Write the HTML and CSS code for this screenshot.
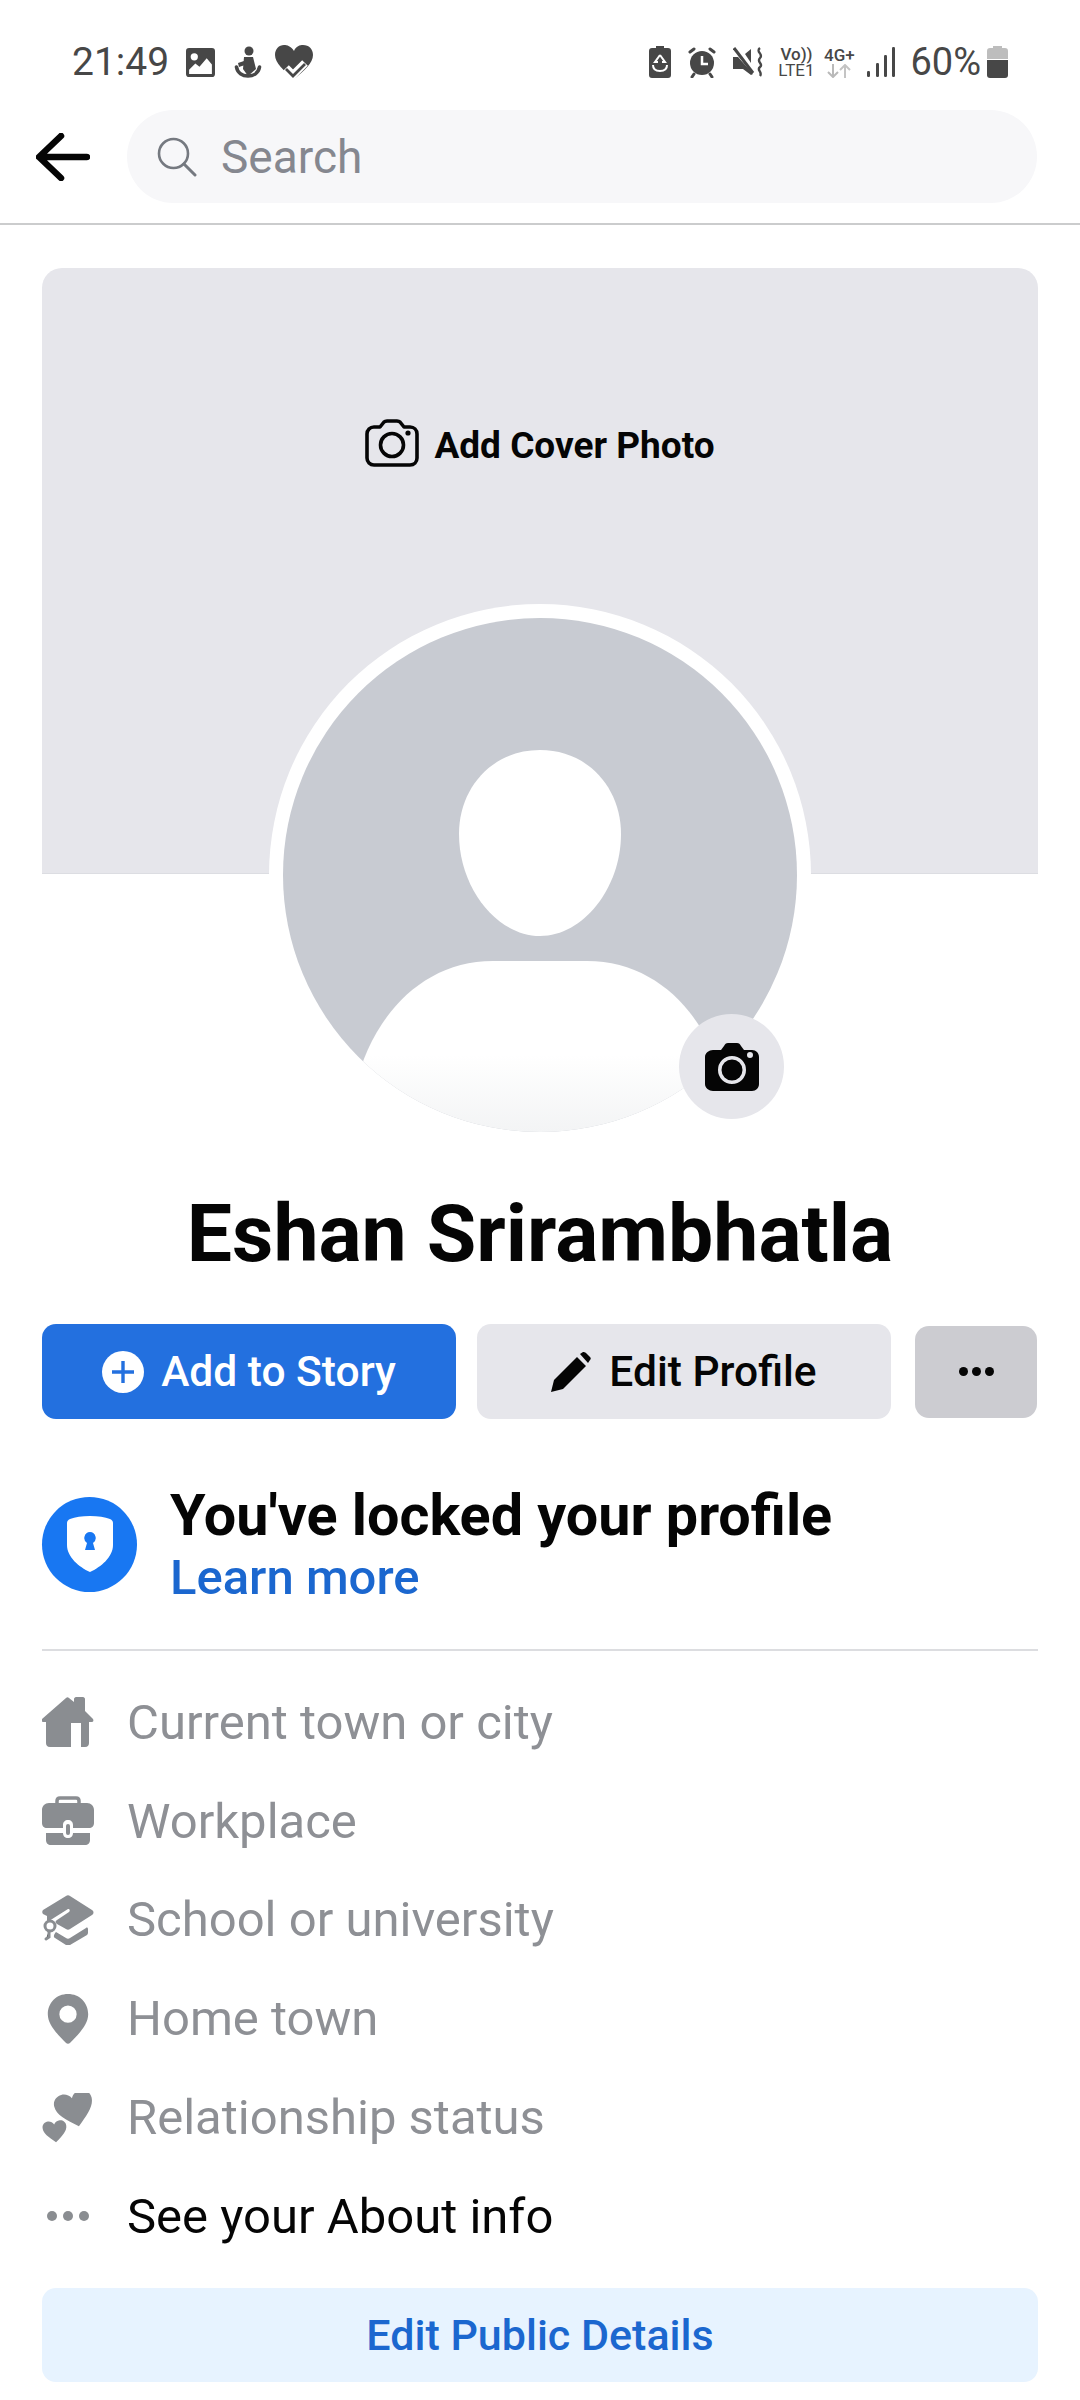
FILE: index.html
```html
<!DOCTYPE html>
<html lang="en">
<head>
<meta charset="utf-8">
<title>Eshan Srirambhatla</title>
<link rel="stylesheet" href="styles.css">
</head>
<body>
<header class="header">
  <div class="status">
    <div class="status-left">
      <span class="clock">21:49</span>
      <svg class="st-gallery" viewBox="0 0 28 28"><path fill="#474747" fill-rule="evenodd" d="M3 0h22a3 3 0 0 1 3 3v22a3 3 0 0 1-3 3H3a3 3 0 0 1-3-3V3a3 3 0 0 1 3-3zM3 25h22v-9l-5-6-7 8-4-3-6 6zM8 5a3.5 3.5 0 1 0 0 7 3.5 3.5 0 0 0 0-7z"/></svg>
      <svg class="st-anchor" viewBox="0 0 28 32"><g fill="#474747"><circle cx="15" cy="5" r="4.500"/><path d="M10 11h9l3 12-8 7-5-7z"/><path d="M4 17l6-2 1 4-6 2z"/></g><path fill="none" stroke="#474747" stroke-width="3.600" stroke-linecap="round" d="M2.500 21c1 6 6 9 11.500 9s10.500-3 11.500-9"/></svg>
      <svg class="st-heart" viewBox="0 0 38 34"><path fill="#474747" d="M19 6C16 1 12 0 9 0 4 0 0 4 0 10c0 8 9 16 19 24 10-8 19-16 19-24 0-6-4-10-10-10-3 0-7 1-9 6z"/><path fill="none" stroke="#fff" stroke-width="8" d="M11 23l7 7 12-12"/><path fill="none" stroke="#474747" stroke-width="2.800" d="M11 24l7 7 12-12"/></svg>
    </div>
    <div class="status-right">
      <svg class="st-saver" viewBox="0 0 22 32"><path fill="#474747" d="M7 0h8v2h4a3 3 0 0 1 3 3v24a3 3 0 0 1-3 3H3a3 3 0 0 1-3-3V5a3 3 0 0 1 3-3h4z"/><path fill="none" stroke="#fff" stroke-width="2" d="M11 9l5 7h-3M11 9l-5 7h3M4 19c0 5 3 6 7 6s7-1 7-6"/></svg>
      <svg class="st-alarm" viewBox="0 0 28 32"><path stroke="#474747" stroke-width="3" stroke-linecap="round" d="M2 6l4-3M26 6l-4-3M6 28l-2 3M22 28l2 3"/><circle cx="14" cy="17" r="12" fill="#474747"/><path fill="none" stroke="#fff" stroke-width="2.5" d="M14 10v8h6"/></svg>
      <svg class="st-mute" viewBox="0 0 30 32"><path fill="#474747" d="M0 11h5l15 17-2 1-8-6H0z"/><path fill="#474747" d="M12 8l6-5v14z"/><path stroke="#474747" stroke-width="3" d="M1 2l19 25"/><path fill="none" stroke="#474747" stroke-width="2.4" d="M27 2c-5 4 4 6 0 10s4 6 0 9 3 5 0 9"/></svg>
      <div class="volte"><span class="vo">Vo))</span><span>LTE1</span></div>
      <div class="net">
        <span>4G+</span>
        <svg class="st-arrows" viewBox="0 0 24 14"><path fill="none" stroke="#b9b9b9" stroke-width="2" d="M6 0v13M1 8l5 5 5-5"/><path fill="none" stroke="#c4c4c4" stroke-width="2" d="M18 14V1M13 6l5-5 5 5"/></svg>
      </div>
      <svg class="st-signal" viewBox="0 0 28 30"><g fill="#474747"><rect x="0" y="24" width="3" height="6" rx="1.2"/><rect x="9" y="16" width="3" height="14" rx="1.2"/><rect x="17" y="8" width="3" height="22" rx="1.2"/><rect x="25" y="0" width="3" height="30" rx="1.2"/></g></svg>
      <span class="percent">60%</span>
      <svg class="st-battery" viewBox="0 0 21 32"><path fill="#bdbdbd" d="M6 0h9v2h3a3 3 0 0 1 3 3v8H0V5a3 3 0 0 1 3-3h3z"/><path fill="#474747" d="M0 14h21v15a3 3 0 0 1-3 3H3a3 3 0 0 1-3-3z"/></svg>
    </div>
  </div>
  <div class="nav">
    <svg class="back" viewBox="0 0 54 48"><path fill="none" stroke="#050505" stroke-width="6.500" stroke-linecap="round" stroke-linejoin="round" d="M51 24H4M25 3L3 24l22 21"/></svg>
    <div class="search">
      <svg class="search-icon" viewBox="0 0 40 40"><circle cx="16.500" cy="16.500" r="14.500" fill="none" stroke="#757980" stroke-width="2.600"/><path stroke="#757980" stroke-width="3" stroke-linecap="round" d="M27 27l11 11"/></svg>
      <span class="search-text">Search</span>
    </div>
  </div>
</header>

<main class="page">
  <section class="cover">
    <svg class="cover-icon" viewBox="0 0 54 48"><path fill="none" stroke="#050505" stroke-width="3.600" stroke-linejoin="round" d="M9 8h6l4-5c1-1 2-1 3-1h10c1 0 2 0 3 1l4 5h6c4 0 7 3 7 7v24c0 4-3 7-7 7H9c-4 0-7-3-7-7V15c0-4 3-7 7-7z"/><circle cx="27" cy="26" r="11.500" fill="none" stroke="#050505" stroke-width="3.600"/><circle cx="43" cy="14" r="2.600" fill="#050505"/></svg>
    <span class="cover-text">Add Cover Photo</span>
  </section>

  <div class="avatar">
    <svg class="avatar-art" viewBox="0 0 514 514">
      <defs>
        <clipPath id="avatarClip"><circle cx="257" cy="257" r="257"/></clipPath>
        <linearGradient id="bust" x1="0" y1="0" x2="0" y2="1"><stop offset="0.55" stop-color="#ffffff"/><stop offset="1" stop-color="#f3f4f5"/></linearGradient>
      </defs>
      <g clip-path="url(#avatarClip)">
        <rect width="514" height="514" fill="#c8cbd2"/>
        <path fill="#fff" d="M257 132c48 0 81 38 81 84 0 54-38 102-81 102s-81-48-81-102c0-46 33-84 81-84z"/>
        <path fill="url(#bust)" d="M72 470C88 400 138 343 210 343h94c72 0 122 57 138 127v44H72z"/>
      </g>
    </svg>
    <div class="avatar-badge">
      <svg class="badge-icon" viewBox="0 0 54 48"><path fill="#050505" fill-rule="evenodd" d="M8 7h8l3-4c1-2 2-3 4-3h9c2 0 3 1 4 3l3 4h8c4 0 7 3 7 7v27c0 4-3 7-7 7H8c-4 0-8-3-8-7V14c0-4 4-7 8-7zm19 6a14 14 0 1 0 0 28 14 14 0 0 0 0-28zm0 3.500a10.500 10.500 0 1 1 0 21 10.500 10.500 0 0 1 0-21zM45 9a3 3 0 1 0 0 6 3 3 0 0 0 0-6z"/></svg>
    </div>
  </div>

  <h1 class="name">Eshan Srirambhatla</h1>

  <div class="actions">
    <button class="btn btn-primary">
      <svg class="btn-plus" viewBox="0 0 42 42"><circle cx="21" cy="21" r="21" fill="#fff"/><path stroke="#2370df" stroke-width="3.400" d="M21 10v22M10 21h22"/></svg>
      <span>Add to Story</span>
    </button>
    <button class="btn btn-secondary">
      <svg class="btn-pencil" viewBox="0 0 40 40"><path fill="#050505" d="M0 40l3-12L26 5l9 9-23 23zM29 2l3-2c1 0 2 0 3 1l4 4c1 1 1 2 0 3l-2 3z"/></svg>
      <span>Edit Profile</span>
    </button>
    <button class="btn-more" aria-label="More"><i></i><i></i><i></i></button>
  </div>

  <section class="locked">
    <div class="shield-disc">
      <svg class="shield" viewBox="0 0 46 56"><path fill="#fff" fill-rule="evenodd" d="M23 0c8 0 15 1 20 3 2 1 3 2 3 4v22c0 12-12 22-23 27C12 51 0 41 0 29V7c0-2 1-3 3-4 5-2 12-3 20-3zm0 16a6 6 0 0 0-3 11l-2 7h10l-2-7a6 6 0 0 0-3-11z"/></svg>
    </div>
    <div class="locked-text">
      <div class="locked-title">You've locked your profile</div>
      <a class="locked-link">Learn more</a>
    </div>
  </section>

  <ul class="details">
    <li class="detail">
      <svg class="detail-icon" viewBox="0 0 52 50"><path fill="#8a8d91" fill-rule="evenodd" d="M27 1l5 4V2c0-1 1-2 2-2h7c1 0 2 1 2 2v12l8 8c1 2 0 3-2 3h-2v21c0 2-1 4-4 4h-4V26H29v24H8c-3 0-4-2-4-4V25H2c-2 0-3-1-2-3L24 1c1-1 2-1 3 0z"/></svg>
      <span>Current town or city</span>
    </li>
    <li class="detail">
      <svg class="detail-icon" viewBox="0 0 52 50"><path fill="none" stroke="#8a8d91" stroke-width="3.500" d="M15 8V5c0-2 1-3 3-3h16c2 0 3 1 3 3v3"/><path fill="#8a8d91" d="M7 7h38c4 0 7 3 7 7v13c0 3-2 5-5 5H31v-3c0-3-2-5-5-5s-5 2-5 5v3H5c-3 0-5-2-5-5V14c0-4 3-7 7-7z"/><path fill="#8a8d91" d="M4 37h17c0 3 2 5 5 5s5-2 5-5h17v7c0 3-2 5-5 5H9c-3 0-5-2-5-5z"/><rect x="24" y="28" width="4" height="11" rx="2" fill="#8a8d91"/></svg>
      <span>Workplace</span>
    </li>
    <li class="detail">
      <svg class="detail-icon" viewBox="0 0 52 50"><path fill="#8a8d91" d="M24 1c1-1 3-1 4 0l22 14c2 1 2 4 0 5L28 34c-1 1-3 1-4 0l-9-5c-2-1-2-3 0-4l12-8c1-1 1-2 0-3l-1 0-19 12H5V21l-4-2c-1-1-1-3 0-4z"/><path fill="#8a8d91" d="M14 37l10 6c1 1 3 1 4 0l16-10c1-1 2 0 2 1v3c0 1 0 2-1 3L28 50h-4l-11-7c-2-1-1-4 1-6z"/><circle cx="8" cy="31" r="5" fill="none" stroke="#8a8d91" stroke-width="3"/><path stroke="#8a8d91" stroke-width="3" stroke-linecap="round" d="M7 36v6l-3 2"/></svg>
      <span>School or university</span>
    </li>
    <li class="detail">
      <svg class="detail-icon" viewBox="0 0 52 52"><path fill="#8a8d91" fill-rule="evenodd" d="M26 0c12 0 21 9 21 21 0 11-11 22-19 30-1 1-3 1-4 0C16 43 5 32 5 21 5 9 14 0 26 0zm0 12a9 9 0 1 0 0 18 9 9 0 0 0 0-18z"/></svg>
      <span>Home town</span>
    </li>
    <li class="detail">
      <svg class="detail-icon" viewBox="0 0 52 52"><g fill="#8a8d91"><path transform="translate(13 -1) scale(1) rotate(-14 20 18)" d="M20 36C8 26 0 19 0 10 0 4 5 0 10 0c4 0 8 2 10 6 2-4 6-6 10-6 5 0 10 4 10 10 0 9-8 16-20 26z"/><path transform="translate(0 29) scale(.62) rotate(-6 20 18)" d="M20 36C8 26 0 19 0 10 0 4 5 0 10 0c4 0 8 2 10 6 2-4 6-6 10-6 5 0 10 4 10 10 0 9-8 16-20 26z"/></g></svg>
      <span>Relationship status</span>
    </li>
    <li class="detail detail-more">
      <svg class="detail-icon" viewBox="0 0 52 20"><g fill="#8a8d91"><circle cx="10" cy="10" r="5"/><circle cx="26" cy="10" r="5"/><circle cx="42" cy="10" r="5"/></g></svg>
      <span>See your About info</span>
    </li>
  </ul>

  <button class="public-btn">Edit Public Details</button>
</main>
</body>
</html>
```

FILE: styles.css
```css
* { box-sizing: border-box; }

html, body {
  margin: 0;
  padding: 0;
  background: #fff;
}

body {
  width: 1080px;
  height: 2400px;
  overflow: hidden;
  font-family: Roboto, "Liberation Sans", sans-serif;
  color: #050505;
}

/* Status bar and search row */
.header {
  height: 225px;
  border-bottom: 2px solid #cbcccd;
}

.status {
  height: 110px;
  padding: 42px 72px 0 72px;
  display: flex;
  justify-content: space-between;
  align-items: flex-start;
}

.status-left,
.status-right {
  display: flex;
  align-items: center;
  height: 40px;
}

.clock {
  font-size: 39px;
  font-weight: 400;
  line-height: 40px;
  color: #474747;
  margin-right: 17px;
}

.st-gallery { width: 29px; height: 29px; margin-right: 19px; }
.st-anchor { width: 28px; height: 32px; margin-right: 13px; }
.st-heart { width: 38px; height: 34px; }

.st-saver { width: 22px; height: 32px; margin-right: 17px; }
.st-alarm { width: 28px; height: 32px; margin-right: 17px; }
.st-mute { width: 30px; height: 32px; margin-right: 13px; }

.volte {
  display: flex;
  flex-direction: column;
  align-items: center;
  width: 40px;
  font-size: 17px;
  line-height: 16px;
  font-weight: 400;
  color: #474747;
  margin-right: 7px;
}

.vo { font-weight: 500; }

.net {
  display: flex;
  flex-direction: column;
  align-items: center;
  width: 32px;
  font-size: 17px;
  line-height: 17px;
  font-weight: 500;
  color: #474747;
  margin-right: 12px;
}

.st-arrows { width: 24px; height: 14px; }
.st-signal { width: 28px; height: 30px; margin-right: 15px; }

.percent {
  font-size: 38px;
  line-height: 40px;
  color: #474747;
  margin-right: 6px;
}

.st-battery { width: 21px; height: 32px; }

.nav {
  display: flex;
  align-items: center;
  padding: 0 43px 0 36px;
}

.back { width: 54px; height: 48px; margin-right: 37px; flex: none; }

.search {
  flex: 1;
  height: 93px;
  border-radius: 47px;
  background: #f7f7f9;
  display: flex;
  align-items: center;
  padding-left: 30px;
}

.search-icon { width: 40px; height: 40px; margin-right: 24px; }

.search-text {
  font-size: 46px;
  line-height: 50px;
  color: #85878f;
}

/* Profile page */
.page {
  padding: 43px 42px 0;
}

.cover {
  height: 606px;
  border-radius: 20px 20px 0 0;
  background: #e6e6eb;
  border-bottom: 1px solid #dcdde2;
  display: flex;
  align-items: flex-start;
  justify-content: center;
  padding-top: 151px;
}

.cover-icon { width: 54px; height: 48px; margin-right: 15px; }

.cover-text {
  font-size: 37px;
  line-height: 54px;
  font-weight: 700;
  color: #050505;
}

.avatar {
  position: relative;
  width: 542px;
  height: 542px;
  margin: -270px auto 0;
  border-radius: 50%;
  background: #fff;
  padding: 14px;
}

.avatar-art { display: block; width: 514px; height: 514px; }

.avatar-badge {
  position: absolute;
  left: 410px;
  top: 410px;
  width: 105px;
  height: 105px;
  border-radius: 50%;
  background: #e6e6eb;
  display: flex;
  align-items: center;
  justify-content: center;
}

.badge-icon { width: 54px; height: 48px; }

.name {
  margin: 38px 0 0;
  text-align: center;
  font-size: 80.500px;
  line-height: 100px;
  font-weight: 700;
  color: #050505;
}

.actions {
  display: flex;
  align-items: center;
  margin-top: 40px;
}

.btn {
  width: 414px;
  height: 95px;
  border: 0;
  border-radius: 14px;
  display: flex;
  align-items: center;
  justify-content: center;
  font-family: inherit;
  font-size: 42.500px;
  font-weight: 500;
  padding: 0;
}

.btn-primary { background: #2370df; color: #fff; margin-right: 21px; }
.btn-secondary { background: #e6e6eb; color: #050505; margin-right: 24px; }

.btn-plus { width: 42px; height: 42px; margin-right: 17px; }
.btn-pencil { width: 40px; height: 40px; margin-right: 18px; }

.btn-more {
  width: 122px;
  height: 92px;
  border: 0;
  border-radius: 14px;
  background: #ccccd1;
  display: flex;
  align-items: center;
  justify-content: center;
  gap: 4px;
  padding: 0;
}

.btn-more i {
  width: 9px;
  height: 9px;
  border-radius: 50%;
  background: #050505;
}

.locked {
  display: flex;
  align-items: center;
  margin-top: 66px;
  padding-bottom: 40px;
  border-bottom: 2px solid #dcdde0;
}

.shield-disc {
  width: 95px;
  height: 95px;
  border-radius: 50%;
  background: #1877f2;
  display: flex;
  align-items: center;
  justify-content: center;
  margin-right: 33px;
  margin-bottom: 6px;
}

.shield { width: 46px; height: 56px; }

.locked-text { display: flex; flex-direction: column; }

.locked-title {
  font-size: 57.500px;
  line-height: 62px;
  font-weight: 700;
  color: #050505;
}

.locked-link {
  font-size: 49px;
  line-height: 62px;
  font-weight: 500;
  color: #1b67cf;
}

.details {
  list-style: none;
  margin: 22px 0 0;
  padding: 0;
}

.detail {
  display: flex;
  align-items: center;
  height: 98.800px;
  font-size: 49px;
  color: #8e9095;
}

.detail-icon { width: 52px; height: 50px; flex: none; margin-right: 33px; }

.detail-more { color: #050505; }
.detail-more .detail-icon { height: 20px; }

.public-btn {
  display: block;
  width: 100%;
  height: 94px;
  margin-top: 22px;
  border: 0;
  border-radius: 14px;
  background: #e7f3ff;
  color: #1b67cf;
  font-family: inherit;
  font-size: 43px;
  font-weight: 500;
  padding: 0;
}
```
